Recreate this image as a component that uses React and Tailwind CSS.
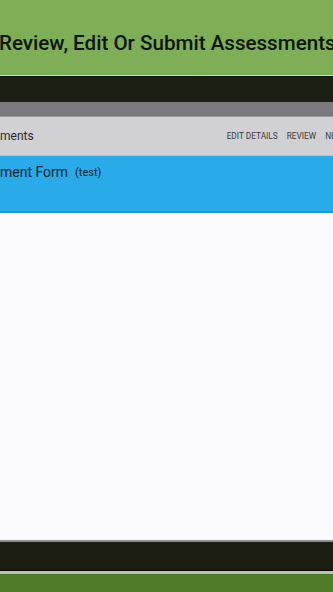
export default function App() {
  return (
    <div className="w-[333px] h-[592px] overflow-hidden flex flex-col bg-[#fbfafd]" style={{ fontFamily: "Roboto, 'Noto Sans', sans-serif" }}>
      <div className="h-[75px] bg-[#7eae56] flex items-center overflow-hidden shrink-0">
        <span className="whitespace-nowrap text-[20.6px] font-medium text-[#10140c] pt-[11px] ml-[-1px]">Review, Edit Or Submit Assessments</span>
      </div>
      <div className="h-[1px] bg-[#c9dcb8] shrink-0" />
      <div className="h-[1px] bg-[#0c0f08] shrink-0" />
      <div className="h-[25px] bg-[#1b2112] shrink-0" />
      <div className="h-[15px] bg-[#7b787e] border-b border-[#9a989d] shrink-0" />
      <div className="h-[39px] bg-[#d1d0d3] flex items-center justify-between overflow-hidden shrink-0 border-b border-[#bdbcbf]">
        <span className="text-[12px] text-[#2b2b2b] whitespace-nowrap">ments</span>
        <div className="flex items-center gap-[9px] text-[8.3px] text-[#3a3a3a] whitespace-nowrap mr-[-13px]">
          <span>EDIT DETAILS</span>
          <span>REVIEW</span>
          <span>NEXT</span>
        </div>
      </div>
      <div className="h-[57px] bg-[#29abe9] border-b-2 border-[#1e98d4] flex items-start pt-[6px] overflow-hidden shrink-0">
        <span className="text-[14px] text-[#15202a] whitespace-nowrap">ment Form</span>
        <span className="text-[11px] text-[#15202a] whitespace-nowrap ml-[7px] mt-[3px]">(test)</span>
      </div>
      <div className="flex-1 bg-[#fbfafd]" />
      <div className="h-[2px] bg-[#8e8c90] shrink-0" />
      <div className="h-[28px] bg-[#1a1d10] shrink-0" />
      <div className="h-[1px] bg-[#060805] shrink-0" />
      <div className="h-[3px] bg-[#bcc0b4] shrink-0" />
      <div className="h-[18px] bg-[#4f7b26] shrink-0" />
    </div>
  );
}
